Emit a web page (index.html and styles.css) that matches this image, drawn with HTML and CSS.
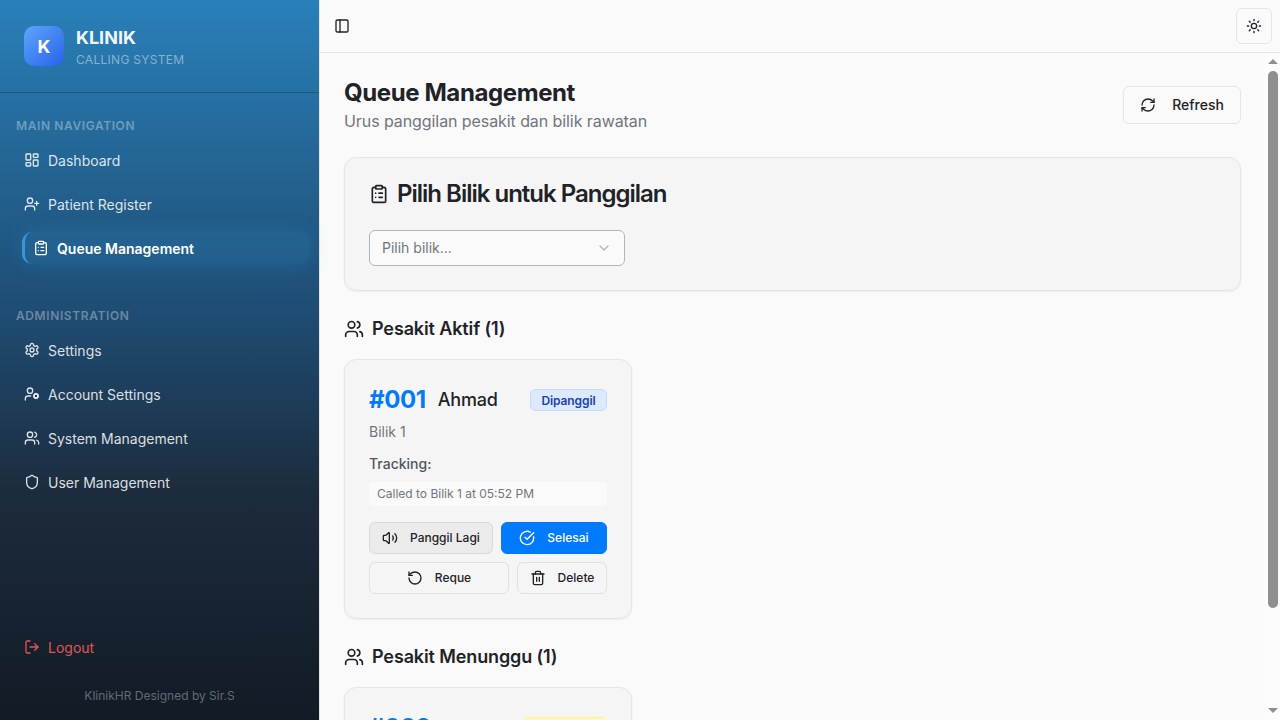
FILE: index.html
```html
<!DOCTYPE html>
<html lang="en">
  <head>
    <meta charset="UTF-8" />
    <title>Queue Management</title>
    <link rel="stylesheet" href="styles.css">
  </head>
  <body>
    <svg class="sprite" xmlns="http://www.w3.org/2000/svg">
      <symbol id="i-panel" viewBox="0 0 24 24"><rect x="3" y="3" width="18" height="18" rx="2"/><path d="M9 3v18"/></symbol>
      <symbol id="i-sun" viewBox="0 0 24 24"><circle cx="12" cy="12" r="4"/><path d="M12 2v2M12 20v2M4.93 4.93l1.41 1.41M17.66 17.66l1.41 1.41M2 12h2M20 12h2M6.34 17.66l-1.41 1.41M19.07 4.93l-1.41 1.41"/></symbol>
      <symbol id="i-refresh" viewBox="0 0 24 24"><path d="M3 12a9 9 0 0 1 9-9 9.75 9.75 0 0 1 6.74 2.74L21 8"/><path d="M21 3v5h-5"/><path d="M21 12a9 9 0 0 1-9 9 9.75 9.75 0 0 1-6.74-2.74L3 16"/><path d="M8 16H3v5"/></symbol>
      <symbol id="i-clipboard" viewBox="0 0 24 24"><rect x="8" y="2" width="8" height="4" rx="1"/><path d="M16 4h2a2 2 0 0 1 2 2v14a2 2 0 0 1-2 2H6a2 2 0 0 1-2-2V6a2 2 0 0 1 2-2h2"/><path d="M12 11h4M12 16h4M8 11h.01M8 16h.01"/></symbol>
      <symbol id="i-dashboard" viewBox="0 0 24 24"><rect x="3" y="3" width="7" height="9" rx="1"/><rect x="14" y="3" width="7" height="5" rx="1"/><rect x="14" y="12" width="7" height="9" rx="1"/><rect x="3" y="16" width="7" height="5" rx="1"/></symbol>
      <symbol id="i-user-plus" viewBox="0 0 24 24"><path d="M16 21v-2a4 4 0 0 0-4-4H6a4 4 0 0 0-4 4v2"/><circle cx="9" cy="7" r="4"/><path d="M19 8v6M22 11h-6"/></symbol>
      <symbol id="i-settings" viewBox="0 0 24 24"><path d="M12.22 2h-.44a2 2 0 0 0-2 2v.18a2 2 0 0 1-1 1.73l-.43.25a2 2 0 0 1-2 0l-.15-.08a2 2 0 0 0-2.73.73l-.22.38a2 2 0 0 0 .73 2.73l.15.1a2 2 0 0 1 1 1.72v.51a2 2 0 0 1-1 1.74l-.15.09a2 2 0 0 0-.73 2.73l.22.38a2 2 0 0 0 2.73.73l.15-.08a2 2 0 0 1 2 0l.43.25a2 2 0 0 1 1 1.73V20a2 2 0 0 0 2 2h.44a2 2 0 0 0 2-2v-.18a2 2 0 0 1 1-1.73l.43-.25a2 2 0 0 1 2 0l.15.08a2 2 0 0 0 2.73-.73l.22-.39a2 2 0 0 0-.73-2.73l-.15-.08a2 2 0 0 1-1-1.74v-.5a2 2 0 0 1 1-1.74l.15-.09a2 2 0 0 0 .73-2.73l-.22-.38a2 2 0 0 0-2.73-.73l-.15.08a2 2 0 0 1-2 0l-.43-.25a2 2 0 0 1-1-1.73V4a2 2 0 0 0-2-2z"/><circle cx="12" cy="12" r="3"/></symbol>
      <symbol id="i-user-cog" viewBox="0 0 24 24"><circle cx="18" cy="15" r="3"/><circle cx="9" cy="7" r="4"/><path d="M10 15H6a4 4 0 0 0-4 4v2"/><path d="m21.7 16.4-.9-.3M15.2 13.9l-.9-.3M16.6 18.7l.3-.9M19.1 12.2l.3-.9M19.6 18.7l-.4-1M16.8 12.3l-.4-1M14.3 16.6l1-.4M20.7 13.8l1-.4"/></symbol>
      <symbol id="i-users" viewBox="0 0 24 24"><path d="M16 21v-2a4 4 0 0 0-4-4H6a4 4 0 0 0-4 4v2"/><circle cx="9" cy="7" r="4"/><path d="M22 21v-2a4 4 0 0 0-3-3.87"/><path d="M16 3.13a4 4 0 0 1 0 7.75"/></symbol>
      <symbol id="i-shield" viewBox="0 0 24 24"><path d="M20 13c0 5-3.5 7.5-7.66 8.95a1 1 0 0 1-.67-.01C7.5 20.5 4 18 4 13V6a1 1 0 0 1 1-1c2 0 4.5-1.2 6.24-2.72a1.17 1.17 0 0 1 1.52 0C14.51 3.81 17 5 19 5a1 1 0 0 1 1 1z"/></symbol>
      <symbol id="i-logout" viewBox="0 0 24 24"><path d="M9 21H5a2 2 0 0 1-2-2V5a2 2 0 0 1 2-2h4"/><path d="m16 17 5-5-5-5"/><path d="M21 12H9"/></symbol>
      <symbol id="i-chevron" viewBox="0 0 24 24"><path d="m6 9 6 6 6-6"/></symbol>
      <symbol id="i-volume" viewBox="0 0 24 24"><path d="M11 4.702a.705.705 0 0 0-1.203-.498L6.413 7.587A1.4 1.4 0 0 1 5.416 8H3a1 1 0 0 0-1 1v6a1 1 0 0 0 1 1h2.416a1.4 1.4 0 0 1 .997.413l3.383 3.384A.705.705 0 0 0 11 19.298z"/><path d="M16 9a5 5 0 0 1 0 6"/><path d="M19.364 18.364a9 9 0 0 0 0-12.728"/></symbol>
      <symbol id="i-check" viewBox="0 0 24 24"><path d="M21.801 10A10 10 0 1 1 17 3.335"/><path d="m9 11 3 3L22 4"/></symbol>
      <symbol id="i-rotate" viewBox="0 0 24 24"><path d="M3 12a9 9 0 1 0 9-9 9.75 9.75 0 0 0-6.74 2.74L3 8"/><path d="M3 3v5h5"/></symbol>
      <symbol id="i-trash" viewBox="0 0 24 24"><path d="M3 6h18"/><path d="M19 6v14c0 1-1 2-2 2H7c-1 0-2-1-2-2V6"/><path d="M8 6V4c0-1 1-2 2-2h4c1 0 2 1 2 2v2"/><path d="M10 11v6M14 11v6"/></symbol>
    </svg>

    <div class="app">
      <aside class="sidebar">
        <div class="brand">
          <div class="brand-logo">K</div>
          <div>
            <div class="brand-name">KLINIK</div>
            <div class="brand-sub">CALLING SYSTEM</div>
          </div>
        </div>

        <nav class="nav">
          <div class="nav-label">MAIN NAVIGATION</div>
          <a class="nav-item"><svg class="icon"><use href="#i-dashboard"/></svg>Dashboard</a>
          <a class="nav-item"><svg class="icon"><use href="#i-user-plus"/></svg>Patient Register</a>
          <a class="nav-item active"><svg class="icon"><use href="#i-clipboard"/></svg>Queue Management</a>

          <div class="nav-label second">ADMINISTRATION</div>
          <a class="nav-item"><svg class="icon"><use href="#i-settings"/></svg>Settings</a>
          <a class="nav-item"><svg class="icon"><use href="#i-user-cog"/></svg>Account Settings</a>
          <a class="nav-item"><svg class="icon"><use href="#i-users"/></svg>System Management</a>
          <a class="nav-item"><svg class="icon"><use href="#i-shield"/></svg>User Management</a>
        </nav>

        <div class="sidebar-foot">
          <a class="nav-item logout"><svg class="icon"><use href="#i-logout"/></svg>Logout</a>
          <div class="credit">KlinikHR Designed by Sir.S</div>
        </div>
      </aside>

      <div class="main">
        <header class="topbar">
          <button class="ghost-btn"><svg class="icon"><use href="#i-panel"/></svg></button>
          <button class="theme-btn"><svg class="icon"><use href="#i-sun"/></svg></button>
        </header>

        <div class="scroll-area">
          <main class="content">
            <div class="page-head">
              <div>
                <h1>Queue Management</h1>
                <p>Urus panggilan pesakit dan bilik rawatan</p>
              </div>
              <button class="refresh-btn"><svg class="icon"><use href="#i-refresh"/></svg>Refresh</button>
            </div>

            <section class="panel">
              <h2><svg class="icon icon-title"><use href="#i-clipboard"/></svg>Pilih Bilik untuk Panggilan</h2>
              <div class="select">
                <span>Pilih bilik...</span>
                <svg class="icon"><use href="#i-chevron"/></svg>
              </div>
            </section>

            <h3 class="section-title"><svg class="icon icon-section"><use href="#i-users"/></svg>Pesakit Aktif (1)</h3>
            <div class="patient-card">
              <div class="patient-head">
                <span class="queue-no">#001</span>
                <span class="patient-name">Ahmad</span>
                <span class="badge badge-blue">Dipanggil</span>
              </div>
              <div class="patient-room">Bilik 1</div>
              <div class="tracking-label">Tracking:</div>
              <div class="tracking-item">Called to Bilik 1 at 05:52 PM</div>
              <div class="actions">
                <button class="btn btn-muted"><svg class="icon"><use href="#i-volume"/></svg>Panggil Lagi</button>
                <button class="btn btn-primary grow"><svg class="icon"><use href="#i-check"/></svg>Selesai</button>
                <button class="btn grow"><svg class="icon"><use href="#i-rotate"/></svg>Reque</button>
                <button class="btn btn-delete"><svg class="icon"><use href="#i-trash"/></svg>Delete</button>
              </div>
            </div>

            <h3 class="section-title"><svg class="icon icon-section"><use href="#i-users"/></svg>Pesakit Menunggu (1)</h3>
            <div class="patient-card">
              <div class="patient-head">
                <span class="queue-no">#002</span>
                <span class="patient-name">Siti</span>
                <span class="badge badge-yellow">Menunggu</span>
              </div>
            </div>
          </main>

          <div class="scrollbar">
            <div class="scroll-arrow"><span class="arrow-up"></span></div>
            <div class="scroll-thumb"></div>
            <div class="scroll-arrow bottom"><span class="arrow-down"></span></div>
          </div>
        </div>
      </div>
    </div>
  </body>
</html>
```

FILE: styles.css
```css
* {
  box-sizing: border-box;
}
html,
body {
  height: 100%;
}
body {
  margin: 0;
  overflow: hidden;
  font-family: Inter, "Liberation Sans", sans-serif;
  color: #1f2328;
  background-color: #fafafa;
}
.sprite {
  display: none;
}
.icon {
  width: 16px;
  height: 16px;
  flex: none;
  fill: none;
  stroke: currentColor;
  stroke-width: 2;
  stroke-linecap: round;
  stroke-linejoin: round;
}
.app {
  display: flex;
  height: 720px;
}

/* sidebar */
.sidebar {
  width: 320px;
  flex: none;
  display: flex;
  flex-direction: column;
  color: #e6edf3;
  border-right: 1px solid #e5e5e5;
  background: linear-gradient(180deg, #2980b9 0%, #1e4a70 45%, #1c2a3a 70%, #111b26 100%);
}
.brand {
  height: 93px;
  padding: 26px 24px 0;
  display: flex;
  gap: 12px;
  border-bottom: 1px solid rgba(20, 50, 80, 0.4);
}
.brand-logo {
  width: 40px;
  height: 40px;
  border-radius: 10px;
  display: flex;
  align-items: center;
  justify-content: center;
  font-size: 18px;
  font-weight: 700;
  color: #fff;
  background: linear-gradient(135deg, #60a5fa, #2563eb);
}
.brand-name {
  font-size: 18px;
  line-height: 24px;
  font-weight: 700;
  color: #f3f6f9;
}
.brand-sub {
  margin-top: 2px;
  font-size: 12px;
  line-height: 16px;
  letter-spacing: 0.3px;
  color: rgba(255, 255, 255, 0.45);
}
.nav {
  padding: 24px 16px 0;
}
.nav-label {
  height: 17px;
  margin-bottom: 10px;
  font-size: 12px;
  line-height: 17px;
  font-weight: 600;
  letter-spacing: 0.6px;
  color: rgba(255, 255, 255, 0.35);
}
.nav-label.second {
  margin-top: 43px;
}
.nav-item {
  height: 32px;
  margin-bottom: 12px;
  padding-left: 8px;
  display: flex;
  align-items: center;
  gap: 8px;
  font-size: 14px;
  color: rgba(255, 255, 255, 0.85);
}
.nav-item.active {
  margin-left: 6px;
  margin-right: -7px;
  padding-left: 8px;
  border-left: 3px solid #3498db;
  border-radius: 10px;
  font-weight: 600;
  color: #fff;
  background: rgba(52, 152, 219, 0.16);
  box-shadow: 0 0 20px rgba(52, 152, 219, 0.24);
}
.sidebar-foot {
  margin-top: auto;
  padding: 0 16px 15px;
}
.logout {
  margin-bottom: 24px;
  color: #e25555;
}
.credit {
  height: 18px;
  font-size: 12px;
  line-height: 18px;
  text-align: center;
  color: rgba(255, 255, 255, 0.35);
}

/* main column */
.main {
  flex: 1;
  min-width: 0;
  display: flex;
  flex-direction: column;
}
.topbar {
  height: 53px;
  flex: none;
  padding: 0 8px;
  display: flex;
  align-items: center;
  justify-content: space-between;
  border-bottom: 1px solid #e5e5e5;
}
.ghost-btn,
.theme-btn {
  display: flex;
  align-items: center;
  justify-content: center;
  padding: 0;
  color: #1f2328;
  background: none;
  border: none;
}
.ghost-btn {
  width: 28px;
  height: 28px;
}
.theme-btn {
  width: 36px;
  height: 36px;
  border: 1px solid #e5e5e5;
  border-radius: 6px;
}
.scroll-area {
  flex: 1;
  min-height: 0;
  display: flex;
}
.content {
  flex: 1;
  min-width: 0;
  overflow: hidden;
  padding: 24px 24px 0;
}

/* scrollbar, the headless browser hides the real one */
.scrollbar {
  width: 15px;
  flex: none;
  display: flex;
  flex-direction: column;
  background: #fcfcfc;
}
.scroll-arrow {
  height: 18px;
  padding-top: 6px;
  padding-left: 1px;
  display: flex;
  justify-content: center;
}
.scroll-arrow.bottom {
  margin-top: auto;
  margin-bottom: 7px;
  height: 5px;
  padding-top: 0;
}
.arrow-up,
.arrow-down {
  width: 0;
  height: 0;
  border-left: 5px solid transparent;
  border-right: 5px solid transparent;
}
.arrow-up {
  border-bottom: 5px solid #8f8f8f;
}
.arrow-down {
  border-top: 5px solid #8f8f8f;
}
.scroll-thumb {
  height: 537px;
  margin: 0 2px 0 3px;
  border-radius: 5px;
  background: #8f8f8f;
}

.page-head {
  display: flex;
  align-items: center;
  justify-content: space-between;
  margin-bottom: 24px;
}
h1 {
  margin: 0;
  font-size: 24px;
  line-height: 32px;
  font-weight: 700;
  letter-spacing: -0.4px;
}
.page-head p {
  margin: 0;
  font-size: 16px;
  line-height: 24px;
  letter-spacing: -0.08px;
  color: #71767d;
}
.refresh-btn {
  width: 118px;
  height: 38px;
  padding: 0 0 1px;
  display: flex;
  align-items: center;
  justify-content: center;
  gap: 16px;
  font-family: inherit;
  font-size: 14px;
  font-weight: 500;
  color: #1f2328;
  background: #fafafa;
  border: 1px solid #e5e5e5;
  border-radius: 6px;
}
.panel {
  padding: 24px;
  background: #f5f5f5;
  border: 1px solid #e5e5e5;
  border-radius: 12px;
  box-shadow: 0 1px 2px rgba(0, 0, 0, 0.05);
}
h2 {
  margin: 0 0 24px;
  display: flex;
  align-items: center;
  gap: 8px;
  font-size: 24px;
  line-height: 24px;
  font-weight: 600;
  letter-spacing: -1px;
}
.icon-title {
  width: 20px;
  height: 20px;
}
.select {
  width: 256px;
  height: 36px;
  padding: 0 12px;
  display: flex;
  align-items: center;
  justify-content: space-between;
  font-size: 14px;
  color: #71767d;
  background: #fafafa;
  border: 1px solid #b5b5b5;
  border-radius: 6px;
}
.select span {
  margin-bottom: 1px;
}
.select .icon {
  opacity: 0.5;
}
.section-title {
  margin: 24px 0 16px;
  display: flex;
  align-items: center;
  gap: 8px;
  font-size: 18px;
  line-height: 28px;
  font-weight: 600;
  letter-spacing: -0.12px;
}
.icon-section {
  width: 20px;
  height: 20px;
}
.patient-card {
  width: 288px;
  padding: 24px;
  background: #f5f5f5;
  border: 1px solid #e5e5e5;
  border-radius: 12px;
  box-shadow: 0 1px 2px rgba(0, 0, 0, 0.05);
}
.patient-head {
  height: 30px;
  display: flex;
  align-items: center;
  gap: 12px;
}
.queue-no {
  font-size: 24px;
  font-weight: 700;
  letter-spacing: -0.4px;
  color: #007bff;
}
.patient-name {
  font-size: 18px;
  font-weight: 500;
  letter-spacing: -0.2px;
}
.badge {
  margin-left: auto;
  margin-top: 2px;
  height: 22px;
  padding: 0 10.5px;
  display: flex;
  align-items: center;
  font-size: 12px;
  font-weight: 600;
  letter-spacing: -0.1px;
  border-radius: 6px;
  border: 1px solid;
}
.badge-blue {
  color: #1e40af;
  background: #dbeafe;
  border-color: #bfdbfe;
}
.badge-yellow {
  color: #854d0e;
  background: #fef9c3;
  border-color: #fef08a;
}
.patient-room {
  margin-top: 8px;
  font-size: 14px;
  line-height: 20px;
  color: #71767d;
}
.tracking-label {
  margin-top: 12px;
  font-size: 14px;
  line-height: 20px;
  font-weight: 500;
  color: #52575e;
}
.tracking-item {
  margin-top: 8px;
  height: 24px;
  padding: 0 8px;
  font-size: 12px;
  line-height: 24px;
  color: #71767d;
  background: #fafafa;
  border-radius: 4px;
}
.actions {
  margin-top: 16px;
  display: flex;
  flex-wrap: wrap;
  gap: 8px;
}
.btn {
  height: 32px;
  padding: 0 12px 1px;
  display: flex;
  align-items: center;
  justify-content: center;
  gap: 12px;
  font-family: inherit;
  font-size: 12px;
  font-weight: 500;
  color: #1f2328;
  background: #f5f5f5;
  border: 1px solid #e0e0e0;
  border-radius: 6px;
}
.btn.grow {
  flex: 1;
}
.btn-delete {
  width: 90px;
}
.btn-muted {
  background: #ebebeb;
  border-color: #d9d9d9;
}
.btn-primary {
  color: #fff;
  background: #007bff;
  border-color: #007bff;
}
```
